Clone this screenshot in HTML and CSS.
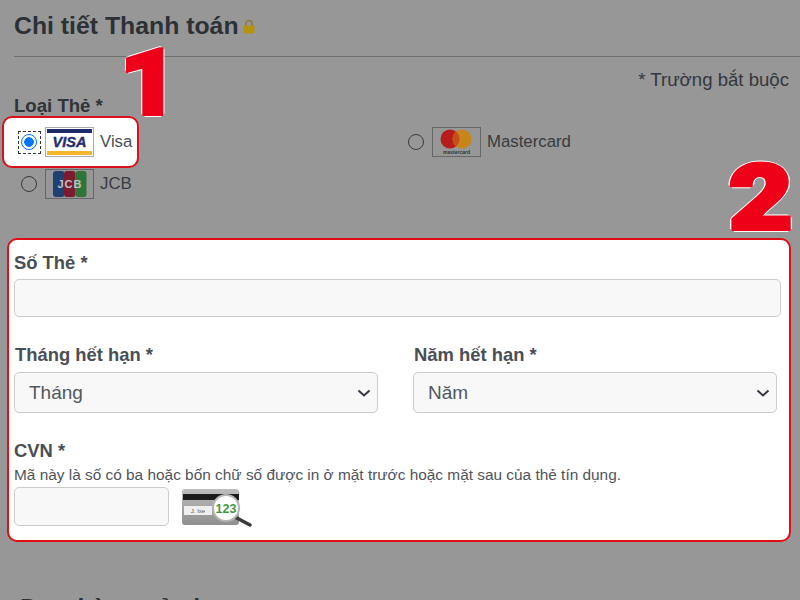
FILE: index.html
```html
<!DOCTYPE html>
<html lang="vi">
<head>
<meta charset="utf-8">
<title>Chi tiết Thanh toán</title>
<link rel="stylesheet" href="styles.css">
</head>
<body>
<div class="page">
  <h1 class="title">Chi tiết Thanh toán<svg class="lock" viewBox="0 0 12 15" width="12" height="15"><path d="M3 7V4.5a3 3 0 0 1 6 0V7" fill="none" stroke="#8f7a3a" stroke-width="1.6"/><rect x="0.5" y="6.5" width="11" height="8" rx="1" fill="#b5930f"/></svg></h1>
  <hr class="rule">
  <p class="required">* Trường bắt buộc</p>
  <p class="type-label">Loại Thẻ *</p>
  <div class="cards">
    <label class="card card-active">
      <span class="focus"><input class="radio" type="radio" name="card" checked></span>
      <svg class="logo" viewBox="0 0 49 30" width="49" height="30"><rect x="0.5" y="0.5" width="48" height="29" fill="#fff" stroke="#aaa"/><rect x="2" y="2" width="45" height="4" fill="#1f2a6b"/><rect x="2" y="24" width="45" height="4" fill="#f2b52c"/><text x="24.5" y="20" text-anchor="middle" class="visa-text">VISA</text></svg>
      <span class="card-name">Visa</span>
    </label>
    <label class="card card-mc">
      <input class="radio" type="radio" name="card">
      <svg class="logo" viewBox="0 0 49 30" width="49" height="30"><rect x="0.5" y="0.5" width="48" height="29" fill="#979797" stroke="#666"/><circle cx="18" cy="12" r="9.5" fill="#b81c1c"/><circle cx="30" cy="12" r="9.5" fill="#c8861a"/><path d="M24 4.6a9.5 9.5 0 0 1 0 14.8a9.5 9.5 0 0 1 0-14.8z" fill="#c2501b"/><text x="24.5" y="27" text-anchor="middle" class="mc-text">mastercard</text></svg>
      <span class="card-name">Mastercard</span>
    </label>
    <label class="card card-jcb">
      <input class="radio" type="radio" name="card">
      <svg class="logo" viewBox="0 0 49 30" width="49" height="30"><rect x="0.5" y="0.5" width="48" height="29" fill="#979797" stroke="#666"/><rect x="8" y="2" width="11.500" height="26" rx="3" fill="#1d4173"/><rect x="19" y="2" width="11.500" height="26" rx="3" fill="#7e1a2e"/><rect x="30.500" y="2" width="11" height="26" rx="3" fill="#2c7437"/><text x="25" y="19" text-anchor="middle" class="jcb-text">JCB</text></svg>
      <span class="card-name">JCB</span>
    </label>
  </div>
  <section class="form-box">
    <label class="field-label">Số Thẻ *</label>
    <input class="control control-wide" type="text">
    <div class="expiry">
      <div class="expiry-col">
        <label class="field-label expiry-label">Tháng hết hạn *</label>
        <div class="select"><span>Tháng</span><svg viewBox="0 0 14 8" width="14" height="8"><path d="M1.500 1.500L7 6.500l5.500-5" fill="none" stroke="#343a40" stroke-width="2"/></svg></div>
      </div>
      <div class="expiry-col">
        <label class="field-label expiry-label">Năm hết hạn *</label>
        <div class="select"><span>Năm</span><svg viewBox="0 0 14 8" width="14" height="8"><path d="M1.500 1.500L7 6.500l5.500-5" fill="none" stroke="#343a40" stroke-width="2"/></svg></div>
      </div>
    </div>
    <label class="field-label cvn-label">CVN *</label>
    <p class="help">Mã này là số có ba hoặc bốn chữ số được in ở mặt trước hoặc mặt sau của thẻ tín dụng.</p>
    <div class="cvn-row">
      <input class="control control-cvn" type="text">
      <svg class="cvn-art" viewBox="0 0 72 38" width="72" height="38">
        <defs><linearGradient id="cardShade" x1="0" y1="0" x2="0" y2="1"><stop offset="0" stop-color="#bdbdbd"/><stop offset="1" stop-color="#8f8f8f"/></linearGradient></defs>
        <rect x="1" y="0" width="57" height="36" rx="3" fill="url(#cardShade)"/>
        <rect x="2" y="5" width="56" height="6" fill="#1c1c1c"/>
        <rect x="3" y="17" width="28" height="9" fill="#efefef"/>
        <text x="17" y="24" text-anchor="middle" class="sig-text">J. Ixe</text>
        <path d="M54 28l15 8" stroke="#3a3a3a" stroke-width="3.500" stroke-linecap="round"/>
        <circle cx="45" cy="19" r="13" fill="#fff" stroke="#b5b5b5" stroke-width="2"/>
        <text x="45" y="24" text-anchor="middle" class="art-text">123</text>
      </svg>
    </div>
  </section>
  <h2 class="next-title">Đơn hàng của bạn</h2>
  <span class="mark mark-one">1</span>
  <span class="mark mark-two">2</span>
</div>
</body>
</html>
```
FILE: styles.css
```css
* { box-sizing: border-box; }
html, body { margin: 0; height: 100%; }
body { background: #979797; font-family: "Liberation Sans", Arial, sans-serif; color: #2f3439; overflow: hidden; }
.page { position: relative; width: 800px; height: 600px; overflow: hidden; display: flex; flex-direction: column; }
.title { margin: 0; padding: 10px 14px 0; font-size: 24.800px; line-height: 32px; font-weight: 700; color: #2c3136; display: flex; align-items: center; }
.lock { margin: 0 0 0 4px; }
.rule { margin: 14px 0 0 14px; border: 0; border-top: 1px solid #6f6f6f; height: 1px; flex: none; }
.required { margin: 11px 11px 0 0; text-align: right; font-size: 18.600px; line-height: 24px; color: #33383d; }
.type-label { margin: 3px 0 0 14px; font-size: 18.600px; line-height: 21px; font-weight: 700; color: #2f3439; }
.cards { display: grid; grid-template-columns: 387px 1fr; padding-left: 2px; grid-template-rows: 52px 30px; }
.card { display: flex; align-items: center; font-size: 16.800px; color: #363b40; padding-left: 19px; }
.radio { appearance: none; margin: 0; width: 16px; height: 16px; border: 1.500px solid #3a3a3a; border-radius: 50%; background: transparent; flex: none; display: block; }
.radio:checked { border: 1.500px solid #0075ff; background: radial-gradient(circle, #0075ff 0 4.500px, #fff 5px); }
.logo { flex: none; margin-left: 8px; }
.card-name { margin-left: 6px; }
.card-active { background: #fff; border: 2px solid #d8121c; border-radius: 10px; width: 137px; padding-left: 14px; color: #4a4f55; }
.focus { border: 1px dashed #333; padding: 2px; display: block; width: 23px; height: 23px; flex: none; }
.card-active .logo { margin-left: 4px; }
.card-active .card-name { margin-left: 6px; }
.card-mc { padding-left: 19px; }
.card-jcb { grid-column: 1; margin-top: 1px; }
.visa-text { font: italic 700 14.500px "Liberation Sans", sans-serif; fill: #252e6e; stroke: #252e6e; stroke-width: 0.400px; }
.mc-text { font: 700 5px "Liberation Sans", sans-serif; fill: #333; }
.jcb-text { font: 700 11px "Liberation Sans", sans-serif; fill: #b9c4c4; letter-spacing: 1px; }
.form-box { margin: 40px 0 0 7px; width: 784px; height: 304px; background: #fff; border: 2px solid #e00d16; border-radius: 10px; padding: 12px 0 0 5px; display: flex; flex-direction: column; flex: none; }
.field-label { display: block; font-size: 18.400px; line-height: 22px; font-weight: 700; color: #494f55; }
.expiry-label { padding-left: 1px; }
.control { display: block; background: #f8f8f8; border: 1px solid #cccccc; border-radius: 5px; padding: 0; }
.control-wide { width: 767px; height: 38px; margin-top: 5px; }
.expiry { display: flex; gap: 35px; margin-top: 27px; }
.expiry-col { width: 364px; }
.select { margin-top: 6px; height: 41px; background: #f8f8f8; border: 1px solid #cccccc; border-radius: 5px; display: flex; align-items: center; justify-content: space-between; padding: 0 6px 0 14px; font-size: 19px; color: #52585e; }
.cvn-label { margin-top: 27px; }
.help { margin: 3px 0 0; font-size: 15.400px; line-height: 20px; color: #4f555b; }
.cvn-row { display: flex; align-items: flex-start; margin-top: 2px; }
.control-cvn { width: 155px; height: 39px; }
.cvn-art { margin: 2px 0 0 12px; }
.art-text { font: 700 12.500px "Liberation Sans", sans-serif; fill: #3f9a3f; }
.sig-text { font: 6px "Liberation Sans", sans-serif; fill: #555; }
.next-title { margin: 50px 0 0 20px; font-size: 24.800px; line-height: 32px; font-weight: 700; color: #2c3136; flex: none; }
.mark { position: absolute; font-family: Roboto, "Liberation Sans", sans-serif; font-weight: 900; color: #ee0019; -webkit-text-stroke: 4px #ee0019; text-shadow: 3px 0 #fff, -3px 0 #fff, 0 3px #fff, 0 -3px #fff, 2px 2px #fff, -2px 2px #fff, 2px -2px #fff, -2px -2px #fff; line-height: 1; }
.mark-one { left: 120px; top: 39px; font-size: 90px; transform-origin: left top; transform: scaleX(1.120); }
.mark-two { left: 729px; top: 154px; font-size: 90px; transform-origin: left top; transform: scaleX(1.220); }
```
